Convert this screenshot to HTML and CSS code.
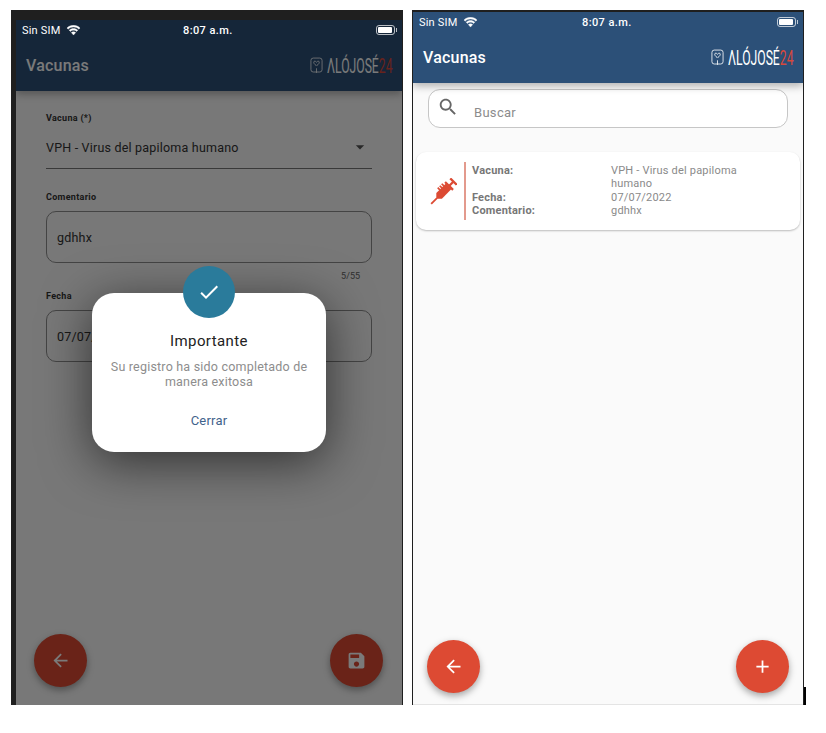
FILE: index.html
```html
<!DOCTYPE html>
<html lang="es">
<head>
<meta charset="UTF-8">
<title>Vacunas</title>
<link rel="stylesheet" href="styles.css">
</head>
<body>
<div class="stage">

<!-- formulario con dialogo -->
<div class="phone phone-form">
<div class="screen">
<header class="topbar">
<div class="status">
<span class="carrier">Sin SIM</span>
<svg class="wifi" viewBox="0 0 16 12"><path d="M8 2.2c2.3 0 4.4.9 5.9 2.4l1.2-1.3C13.3 1.400 10.800.3 8 .3S2.700 1.400.9 3.300l1.200 1.300C3.600 3.100 5.700 2.200 8 2.200zM8 5.600c1.400 0 2.600.5 3.500 1.400l1.200-1.300C11.500 4.500 9.800 3.800 8 3.800s-3.500.7-4.700 1.900L4.500 7c.9-.9 2.100-1.400 3.500-1.400zM8 7.400c-1 0-1.800.4-2.400.9L8 11l2.400-2.700c-.6-.5-1.400-.9-2.400-.9z"/></svg>
<span class="time">8:07 a.m.</span>
<span class="battery"><i></i></span>
</div>
<div class="titlerow">
<span class="title">Vacunas</span>
<div class="logo">
<svg class="logo-icon" viewBox="0 0 14 18"><rect x="1" y="1" width="12" height="15" rx="2.500"/><path d="M4 5.500c0-1.500 2-1.500 3 0 1-1.500 3-1.500 3 0 0 2-3 3.500-3 4-.0-.5-3-2-3-4zM7 12v5"/></svg>
<span class="logo-text">ΛLÓJOSÉ<b>24</b></span>
</div>
</div>
</header>
<main class="form">
<label class="field-label">Vacuna (*)</label>
<div class="select">
<span>VPH - Virus del papiloma humano</span>
<svg class="caret" viewBox="0 0 24 24"><path d="M7 10l5 5 5-5z"/></svg>
</div>
<label class="field-label gap-big">Comentario</label>
<div class="input">gdhhx</div>
<div class="counter">5/55</div>
<label class="field-label gap-small">Fecha</label>
<div class="input">07/07/2022</div>
<div class="spacer"></div>
<div class="fabs fabs-form">
<button class="fab"><svg viewBox="0 0 24 24"><path d="M20 11H7.830l5.590-5.590L12 4l-8 8 8 8 1.410-1.410L7.830 13H20v-2z"/></svg></button>
<button class="fab"><svg viewBox="0 0 24 24"><path d="M17 3H5c-1.110 0-2 .9-2 2v14c0 1.100.89 2 2 2h14c1.100 0 2-.9 2-2V7l-4-4zm-5 16c-1.660 0-3-1.340-3-3s1.340-3 3-3 3 1.340 3 3-1.340 3-3 3zm3-10H5V5h10v4z"/></svg></button>
</div>
</main>
<div class="scrim">
<div class="badge"><svg viewBox="0 0 24 24"><path d="M9 16.170L4.830 12l-1.420 1.410L9 19 21 7l-1.410-1.410z"/></svg></div>
<div class="dialog">
<h2>Importante</h2>
<p>Su registro ha sido completado de manera exitosa</p>
<a class="close">Cerrar</a>
</div>
</div>
</div>
</div>

<!-- listado -->
<div class="phone phone-list">
<div class="screen">
<header class="topbar">
<div class="status">
<span class="carrier">Sin SIM</span>
<svg class="wifi" viewBox="0 0 16 12"><path d="M8 2.2c2.3 0 4.4.9 5.9 2.4l1.2-1.3C13.3 1.400 10.800.3 8 .3S2.700 1.400.9 3.300l1.200 1.300C3.600 3.100 5.700 2.200 8 2.200zM8 5.600c1.400 0 2.600.5 3.500 1.400l1.200-1.300C11.500 4.500 9.800 3.800 8 3.800s-3.500.7-4.700 1.900L4.500 7c.9-.9 2.100-1.400 3.500-1.400zM8 7.400c-1 0-1.800.4-2.400.9L8 11l2.400-2.700c-.6-.5-1.400-.9-2.400-.9z"/></svg>
<span class="time">8:07 a.m.</span>
<span class="battery"><i></i></span>
</div>
<div class="titlerow">
<span class="title">Vacunas</span>
<div class="logo">
<svg class="logo-icon" viewBox="0 0 14 18"><rect x="1" y="1" width="12" height="15" rx="2.500"/><path d="M4 5.500c0-1.500 2-1.500 3 0 1-1.500 3-1.500 3 0 0 2-3 3.500-3 4-.0-.5-3-2-3-4zM7 12v5"/></svg>
<span class="logo-text">ΛLÓJOSÉ<b>24</b></span>
</div>
</div>
</header>
<main class="list">
<div class="search">
<svg viewBox="0 0 24 24"><path d="M15.500 14h-.79l-.28-.27C15.410 12.590 16 11.110 16 9.500 16 5.910 13.090 3 9.500 3S3 5.910 3 9.500 5.910 16 9.500 16c1.610 0 3.090-.59 4.230-1.570l.27.28v.79l5 4.990L20.490 19l-4.990-5zm-6 0C7.010 14 5 11.990 5 9.500S7.010 5 9.500 5 14 7.010 14 9.500 11.990 14 9.500 14z"/></svg>
<span>Buscar</span>
</div>
<div class="card">
<div class="card-icon">
<svg viewBox="0 0 24 24"><g transform="rotate(45 12 12)"><rect x="8" y="-1.500" width="8" height="2"/><rect x="11" y="0" width="2" height="5"/><rect x="7" y="4" width="10" height="2"/><path d="M8.500 5.500h7v12l-2.500 2.500h-2l-2.500-2.500z"/><rect x="11.200" y="19" width="1.600" height="8.500"/><rect x="6" y="7.500" width="3" height="1.500"/><rect x="6" y="10" width="3" height="1.500"/><rect x="6" y="12.500" width="3" height="1.500"/></g></svg>
</div>
<div class="card-data">
<span class="key">Vacuna:</span><span class="val">VPH - Virus del papiloma humano</span>
<span class="key">Fecha:</span><span class="val">07/07/2022</span>
<span class="key">Comentario:</span><span class="val">gdhhx</span>
</div>
</div>
<div class="spacer"></div>
<div class="fabs fabs-list">
<button class="fab"><svg viewBox="0 0 24 24"><path d="M20 11H7.830l5.590-5.590L12 4l-8 8 8 8 1.410-1.410L7.830 13H20v-2z"/></svg></button>
<button class="fab"><svg viewBox="0 0 24 24"><path d="M19 13h-6v6h-2v-6H5v-2h6V5h2v6h6v2z"/></svg></button>
</div>
</main>
</div>
</div>

</div>
</body>
</html>
```

FILE: styles.css
```css
* {
box-sizing: border-box;
}
body {
margin: 0;
background-color: #fff;
font-family: Roboto, "Liberation Sans", sans-serif;
}
.stage {
display: flex;
gap: 9px;
padding: 10px 0 0 11px;
}
.phone {
position: relative;
width: 392px;
height: 695px;
display: flex;
}
.phone-form {
border-style: solid;
border-color: #1f1f1f;
border-width: 10px 1px 0 5px;
}
.phone-list {
border-style: solid;
border-color: #1f1f1f;
border-width: 2px 1px 0 1px;
}
/* trozo negro abajo a la derecha */
.phone-list::after {
content: "";
position: absolute;
right: -3px;
bottom: 0;
width: 2px;
height: 18px;
background-color: #000;
}
.screen {
position: relative;
flex: 1;
display: flex;
flex-direction: column;
background-color: #fafafa;
overflow: hidden;
}
.phone-list .screen {
border-bottom: 1px solid #e4e4e4;
}

/* barra superior */
.topbar {
height: 71px;
background-color: #2c5078;
color: #fff;
box-shadow: 0 3px 8px rgba(0, 0, 0, 0.3);
position: relative;
}
.status {
height: 20px;
padding: 0 7px 0 6px;
display: flex;
align-items: center;
font-size: 11px;
letter-spacing: 0.2px;
position: relative;
z-index: 3;
}
.wifi {
width: 15px;
height: 11px;
margin-left: 5px;
fill: #fff;
stroke: #fff;
stroke-width: 0.4;
}
.time {
position: absolute;
left: 167px;
font-weight: 500;
letter-spacing: 0.4px;
}
.phone-list .time {
left: 169px;
}
.battery {
position: relative;
margin-left: auto;
width: 19px;
height: 10px;
border: 1px solid rgba(255, 255, 255, 0.7);
border-radius: 3px;
padding: 1px;
display: flex;
}
.battery::after {
content: "";
position: absolute;
right: -3px;
top: 2px;
width: 1px;
height: 4px;
background-color: rgba(255, 255, 255, 0.7);
}
.battery i {
width: 14px;
background-color: #fff;
border-radius: 1px;
}
.titlerow {
height: 51px;
padding: 0 6px 0 10px;
display: flex;
align-items: center;
justify-content: space-between;
}
.title {
font-size: 16px;
font-weight: 500;
letter-spacing: 0.2px;
}
.logo {
display: flex;
align-items: center;
gap: 4px;
}
.logo-icon {
width: 13px;
height: 17px;
fill: none;
stroke: #e6ebf0;
stroke-width: 1;
}
.logo-text {
display: inline-block;
width: 69px;
font-size: 21px;
font-weight: 400;
white-space: nowrap;
transform: scaleX(0.58);
transform-origin: left center;
}
.logo-text b {
font-weight: 400;
color: #d9483b;
}

/* formulario */
.form {
flex: 1;
display: flex;
flex-direction: column;
padding: 21px 30px 0;
color: #333;
}
.field-label {
display: block;
height: 12px;
line-height: 12px;
font-size: 9px;
font-weight: 700;
letter-spacing: 0.3px;
}
.gap-big {
margin-top: 22px;
}
.gap-small {
margin-top: 8px;
}
.select {
margin-top: 8px;
height: 37px;
padding-bottom: 6px;
border-bottom: 1px solid #777;
display: flex;
align-items: center;
justify-content: space-between;
font-size: 12.500px;
letter-spacing: 0.2px;
}
.caret {
width: 20px;
height: 20px;
margin-right: 2px;
fill: #555;
}
.input {
margin-top: 8px;
height: 52px;
padding: 0 10px;
display: flex;
align-items: center;
border: 1px solid #8f8f8f;
border-radius: 10px;
font-size: 12.500px;
letter-spacing: 0.2px;
}
.counter {
margin-top: 7px;
height: 12px;
line-height: 12px;
padding-right: 12px;
text-align: right;
font-size: 9px;
color: #666;
}
.spacer {
flex: 1;
}
.fabs {
display: flex;
justify-content: space-between;
}
.fabs-form {
margin: 0 -11px 18px -12px;
}
.fabs-list {
padding: 0 14px 11px 14px;
}
.fab {
width: 53px;
height: 53px;
padding: 0;
border: none;
border-radius: 50%;
background-color: #dd4a33;
box-shadow: 0 3px 7px rgba(0, 0, 0, 0.35);
display: flex;
align-items: center;
justify-content: center;
}
.fab svg {
width: 21px;
height: 21px;
fill: #fff;
}

/* capa oscura y dialogo */
.scrim {
position: absolute;
inset: 0;
z-index: 2;
padding-top: 246px;
background-color: rgba(0, 0, 0, 0.52);
display: flex;
flex-direction: column;
align-items: center;
}
.badge {
position: relative;
z-index: 1;
width: 52px;
height: 52px;
border-radius: 50%;
background-color: #2a7b9b;
display: flex;
align-items: center;
justify-content: center;
}
.badge svg {
width: 24px;
height: 24px;
fill: #fff;
}
.dialog {
width: 234px;
height: 159px;
margin-top: -25px;
padding-top: 39px;
background-color: #fff;
border-radius: 22px;
box-shadow: 0 10px 50px rgba(0, 0, 0, 0.6);
text-align: center;
}
.dialog h2 {
margin: 0;
font-size: 15px;
font-weight: 400;
line-height: 18px;
letter-spacing: 0.4px;
color: #222;
}
.dialog p {
margin: 9px 0 0;
padding: 0 14px;
font-size: 12.500px;
line-height: 15px;
letter-spacing: 0.2px;
color: #8d8d8d;
}
.close {
display: block;
margin-top: 24px;
font-size: 13px;
letter-spacing: 0.2px;
color: #3f638c;
}

/* listado */
.list {
flex: 1;
display: flex;
flex-direction: column;
padding-top: 6px;
}
.search {
margin: 0 15px;
height: 39px;
padding-left: 8px;
display: flex;
align-items: center;
background-color: #fff;
border: 1px solid #c6c6c6;
border-radius: 12px;
}
.search svg {
width: 22px;
height: 22px;
margin-top: -3px;
fill: #666;
}
.search span {
margin-left: 15px;
padding-top: 7px;
font-size: 13px;
letter-spacing: 0.3px;
color: #8c8c8c;
}
.card {
margin: 24px 3px 0;
height: 78px;
padding: 10px 8px 10px 0;
display: flex;
background-color: #fff;
border-radius: 10px;
box-shadow: 0 1px 2px rgba(0, 0, 0, 0.25);
}
.card-icon {
width: 50px;
flex: none;
display: flex;
align-items: center;
justify-content: center;
border-right: 2px solid #e39a8d;
}
.card-icon svg {
width: 27px;
height: 27px;
margin-left: 6px;
fill: #dc4a33;
}
.card-data {
flex: 1;
margin-left: 6px;
padding-top: 2px;
display: grid;
grid-template-columns: 139px 140px;
align-content: start;
font-size: 11px;
line-height: 13.300px;
letter-spacing: 0.2px;
color: #8a8a8a;
}
.key {
font-weight: 700;
color: #777;
}
```
